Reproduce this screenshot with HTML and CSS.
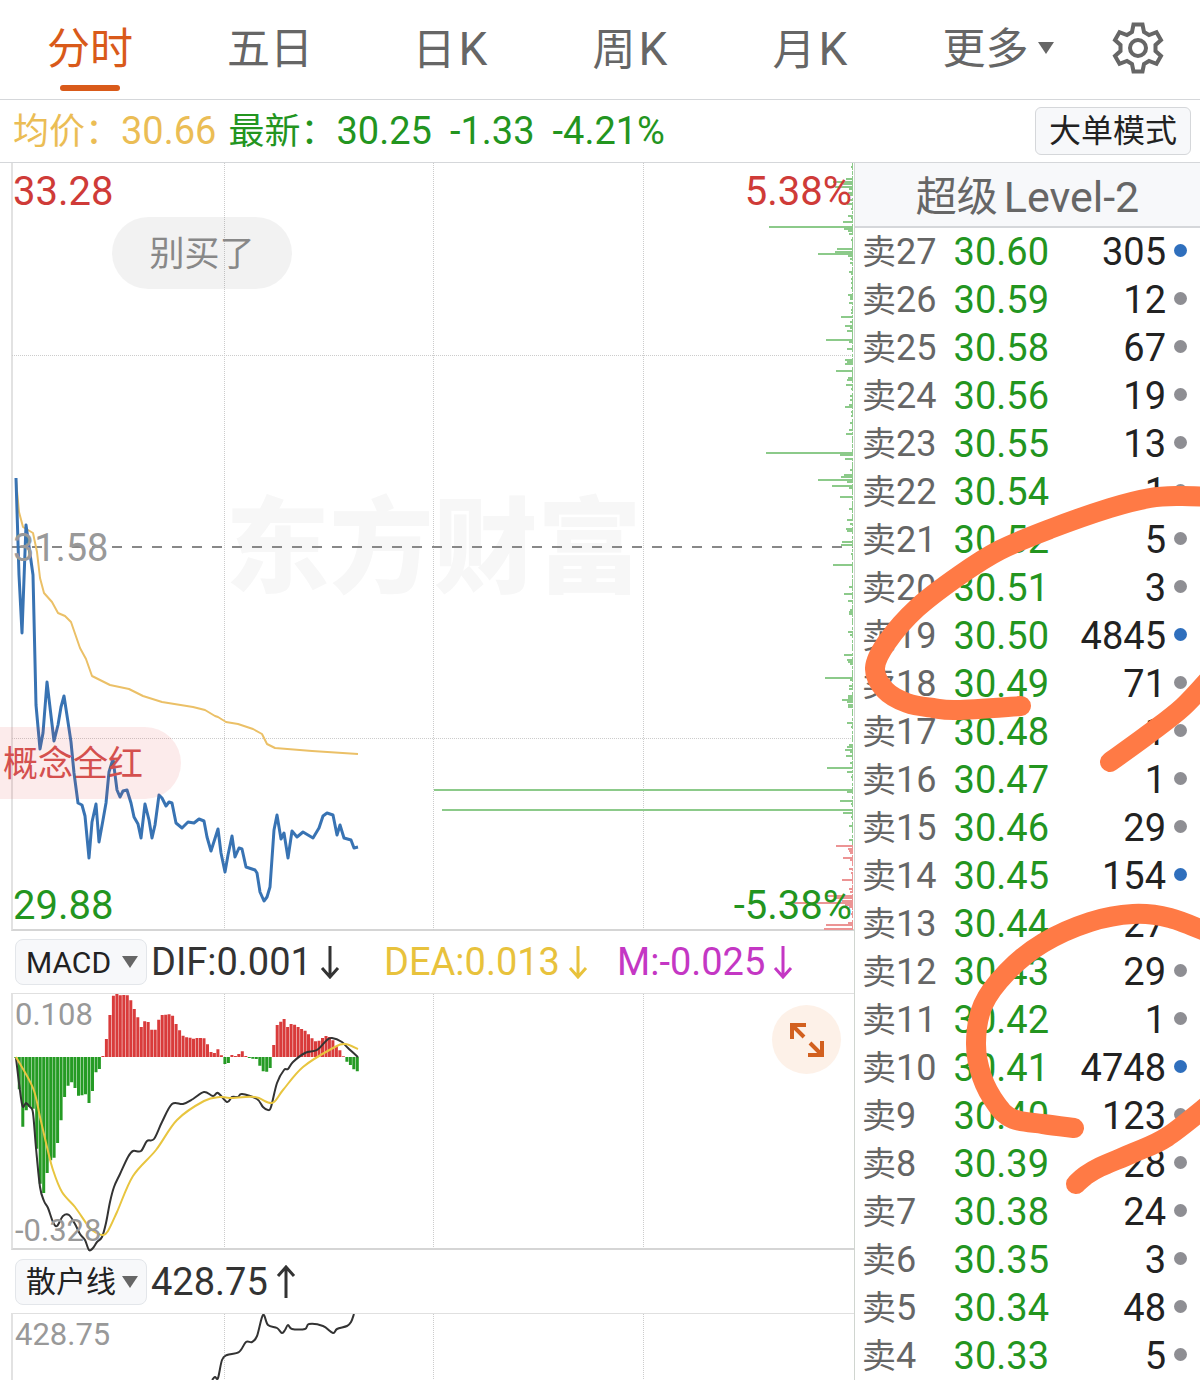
FILE: index.html
```
<!DOCTYPE html>
<html lang="zh-CN">
<head>
  <meta charset="UTF-8" />
  <meta name="viewport" content="width=device-width, initial-scale=1" />
  <title>分时行情</title>
  <link rel="stylesheet" href="styles.css">
</head>
<body>

<nav class="tabs">
  <a href="#" class="tab active">分时</a>
  <a href="#" class="tab">五日</a>
  <a href="#" class="tab">日<span class="k">K</span></a>
  <a href="#" class="tab">周<span class="k">K</span></a>
  <a href="#" class="tab">月<span class="k">K</span></a>
  <button class="tab more" type="button">更多<span class="caret"></span></button>
  <button class="settings" type="button" aria-label="设置">
    <svg width="52" height="52" viewBox="0 0 52 52">
      <path d="M21.5 2.5H30.5L32 10L37 13L44.5 10.2L49 18L43.5 23V29L49 34L44.5 41.8L37 39L32 42L30.5 49.5H21.5L20 42L15 39L7.5 41.8L3 34L8.5 29V23L3 18L7.5 10.2L15 13L20 10Z" />
      <circle cx="26" cy="26" r="8" />
    </svg>
  </button>
</nav>

<div class="quote">
  <span class="avg">均价：<span class="num">30.66</span></span>
  <span class="last">最新：<span class="num">30.25</span></span>
  <span class="last num">-1.33</span>
  <span class="last num">-4.21%</span>
  <button class="mode" type="button">大单模式</button>
</div>

<main class="main">
  <section class="charts">

    <!-- 分时图 -->
    <div class="chart chart-price">
      <div class="watermark">东方财富</div>
      <svg viewBox="13 163 841 766" preserveAspectRatio="none">
        <path class="grid" d="M12 355.500H853M12 738.500H853M224.500 163V930M433.500 163V930M643.500 163V930" />
        <path class="base" d="M12 547H853" />
        <path class="depth sell-edge" d="M852.500 163V846" />
        <path class="depth buy-edge" d="M852.500 846V930" />
        <path class="depth" id="depthSell" />
        <path class="depth depth-buy" id="depthBuy" />
        <path class="line avg-line" id="avgLine" />
        <path class="line price-line" id="priceLine" />
      </svg>
      <span class="label top-left up">33.28</span>
      <span class="label top-right up">5.38%</span>
      <span class="label middle">31.58</span>
      <span class="label bottom-left down">29.88</span>
      <span class="label bottom-right down">-5.38%</span>
      <span class="comment comment-gray">别买了</span>
      <span class="comment comment-red">概念全红</span>
    </div>

    <!-- MACD -->
    <div class="toolbar">
      <span class="picker">
        <select aria-label="指标一"><option>MACD</option></select>
      </span>
      <div class="values">
        <span>DIF:0.001<svg class="arrow" viewBox="0 0 20 34"><path d="M10 1V32M2 23L10 32L18 23" /></svg></span>
        <span class="dea">DEA:0.013<svg class="arrow" viewBox="0 0 20 34"><path d="M10 1V32M2 23L10 32L18 23" /></svg></span>
        <span class="m">M:-0.025<svg class="arrow" viewBox="0 0 20 34"><path d="M10 1V32M2 23L10 32L18 23" /></svg></span>
      </div>
    </div>
    <div class="chart chart-macd">
      <svg viewBox="13 994 841 254" preserveAspectRatio="none">
        <path class="grid" d="M224.500 994V1248M433.500 994V1248M643.500 994V1248" />
        <path class="macd-up" id="macdUp" />
        <path class="macd-down" id="macdDown" />
        <path class="line dif-line" id="difLine" />
        <path class="line dea-line" id="deaLine" />
      </svg>
      <span class="label small top-left">0.108</span>
      <span class="label small bottom-left">-0.328</span>
      <button class="expand" type="button" aria-label="全屏">
        <svg width="36" height="36" viewBox="0 0 36 36">
          <path d="M3 17V3H17M3 3L15 15M33 19V33H19M33 33L21 21" />
        </svg>
      </button>
    </div>

    <!-- 散户线 -->
    <div class="toolbar">
      <span class="picker">
        <select aria-label="指标二"><option>散户线</option></select>
      </span>
      <div class="values">
        <span>428.75<svg class="arrow" viewBox="0 0 20 34"><path d="M10 33V2M2 11L10 2L18 11" /></svg></span>
      </div>
    </div>
    <div class="chart chart-retail">
      <svg viewBox="13 1314 841 66" preserveAspectRatio="none">
        <path class="grid" d="M224.500 1314V1380M433.500 1314V1380M643.500 1314V1380" />
        <path class="line dif-line" id="retailLine" />
      </svg>
      <span class="label small top-left">428.75</span>
    </div>
  </section>

  <!-- 盘口 -->
  <aside class="book">
    <h2>超级<span>Level-2</span></h2>
    <table>
      <tbody id="bookRows"></tbody>
    </table>
    <svg class="marker" viewBox="855 163 345 1217">
      <path id="markerA" />
      <path id="markerB" />
      <path id="markerC" />
      <path id="markerD" />
    </svg>
  </aside>
</main>

<script>
  // [档位, 价格, 手数]
  const orders = [
    [27, '30.60', 305], [26, '30.59', 12], [25, '30.58', 67], [24, '30.56', 19],
    [23, '30.55', 13], [22, '30.54', 1], [21, '30.52', 5], [20, '30.51', 3],
    [19, '30.50', 4845], [18, '30.49', 71], [17, '30.48', 1], [16, '30.47', 1],
    [15, '30.46', 29], [14, '30.45', 154], [13, '30.44', 27], [12, '30.43', 29],
    [11, '30.42', 1], [10, '30.41', 4748], [9, '30.40', 123], [8, '30.39', 28],
    [7, '30.38', 24], [6, '30.35', 3], [5, '30.34', 48], [4, '30.33', 5]
  ];
  // 蓝点的档位
  const marked = [27, 19, 14, 10];

  document.getElementById('bookRows').innerHTML = orders.map(([level, price, qty]) => `
    <tr>
      <th scope="row"><span class="side">卖</span>${level}</th>
      <td class="price">${price}</td>
      <td class="qty">${qty}<i class="dot${marked.includes(level) ? ' blue' : ''}"></i></td>
    </tr>`).join('');

  function setPath(id, d) {
    document.getElementById(id).setAttribute('d', d);
  }

  function polyline(p) {
    return 'M' + p.map(a => a.join(' ')).join('L');
  }

  // Catmull-Rom 平滑曲线
  function smooth(p) {
    let d = 'M' + p[0].join(' ');
    for (let i = 0; i < p.length - 1; i++) {
      const a = p[i - 1] || p[i], b = p[i], c = p[i + 1], e = p[i + 2] || c;
      d += `C${b[0] + (c[0] - a[0]) / 6} ${b[1] + (c[1] - a[1]) / 6} ${c[0] - (e[0] - b[0]) / 6} ${c[1] - (e[1] - b[1]) / 6} ${c[0]} ${c[1]}`;
    }
    return d;
  }

  // --- 分时线 ---
  setPath('priceLine', polyline([
    [16,478],[19,575],[22,633],[26,525],[33,575],[36,705],[40,749],[43,733],[47,682],[54,741],[58,725],
    [61,707],[64,696],[68,722],[71,742],[74,773],[78,803],[82,805],[85,816],[89,858],[92,822],[96,804],
    [99,842],[103,820],[106,803],[109,772],[113,759],[117,790],[120,797],[123,791],[127,790],[131,803],
    [134,817],[138,824],[141,838],[145,804],[149,820],[152,838],[155,825],[159,795],[162,798],[166,806],
    [169,802],[172,803],[176,823],[182,828],[188,822],[194,823],[199,819],[204,821],[207,837],[211,851],
    [218,829],[221,853],[225,872],[228,855],[232,836],[235,857],[239,848],[242,849],[246,867],[255,870],
    [257,873],[260,892],[264,901],[267,897],[270,887],[274,830],[277,815],[281,839],[284,833],[288,858],
    [292,831],[297,837],[303,832],[313,838],[319,828],[323,816],[327,813],[333,815],[337,835],[340,825],
    [344,838],[351,840],[354,848],[358,847]
  ]));
  setPath('avgLine', polyline([
    [16,480],[19,512],[23,527],[33,533],[37,552],[40,578],[44,593],[52,602],[58,613],[65,616],[71,622],
    [80,648],[86,659],[92,676],[110,685],[129,689],[143,696],[162,702],[193,707],[205,710],[215,716],
    [218,717],[226,722],[238,724],[253,729],[262,734],[267,744],[275,748],[312,751],[358,754]
  ]));

  // --- 挂单分布: [y, 长度] ---
  const sellDepth = [
    [167,2],[172,1],[179,7],[182,20],[184,10],[187,18],[189,4],[193,5],[195,3],[200,5],[204,6],[209,2],
    [216,5],[218,2],[222,10],[227,84],[229,9],[231,5],[234,4],[240,2],[245,1],[249,16],[252,18],[254,35],
    [256,5],[259,3],[263,3],[272,4],[274,2],[279,2],[283,2],[288,2],[295,5],[297,3],[299,3],[303,4],
    [310,2],[313,2],[317,12],[322,3],[326,8],[328,3],[331,6],[340,27],[342,4],[349,6],[360,8],[362,6],
    [364,8],[371,17],[378,5],[380,6],[385,7],[389,2],[396,3],[400,3],[405,4],[407,8],[412,2],[416,2],
    [423,3],[430,4],[434,7],[439,1],[445,1],[453,87],[455,13],[459,8],[470,3],[475,9],[477,12],[480,35],
    [482,6],[486,21],[488,4],[497,13],[509,4],[520,6],[524,3],[529,7],[531,6],[538,1],[542,11],[545,12],
    [554,2],[565,20],[569,1],[577,1],[587,4],[594,9],[601,5],[610,3],[612,4],[614,4],[621,1],[632,5],
    [635,3],[648,1],[655,9],[660,6],[662,5],[664,3],[678,28],[680,3],[686,4],[689,4],[696,5],[698,5],
    [700,11],[702,6],[705,5],[707,5],[723,6],[727,2],[732,1],[745,4],[747,6],[750,8],[752,3],[756,7],
    [763,3],[768,26],[772,6],[777,2],[790,419],[792,6],[801,13],[804,2],[810,411],[813,10],[817,2],
    [826,4],[840,4]
  ];
  const buyDepth = [
    [846,17],[849,5],[851,4],[853,3],[858,10],[860,3],[869,4],[873,2],[880,11],[889,4],[892,3],[896,26],
    [898,18],[901,11],[903,66],[905,8],[907,4],[914,2],[923,5],[925,27],[929,29]
  ];
  const depthPath = rows => rows.map(([y, w]) => `M853 ${y}h${-w}`).join('');
  setPath('depthSell', depthPath(sellDepth));
  setPath('depthBuy', depthPath(buyDepth));

  // --- MACD 柱, 三分之一像素为单位 ---
  const macd = [
    -3,-97,-209,-160,-150,-155,-275,-380,-408,-348,-310,-302,-258,-190,-120,-86,-76,-93,-116,-115,
    -112,-138,-102,-46,-36,3,54,126,184,189,185,186,185,170,144,119,90,107,105,82,82,112,126,127,128,
    124,99,80,64,59,58,55,57,57,56,38,15,12,23,5,-21,-18,6,3,9,17,3,-3,-5,-6,-26,-43,-44,-33,36,96,
    106,114,90,99,97,90,84,79,68,56,47,49,57,63,60,50,32,20,2,-14,-24,-37,-43
  ];
  let up = '', down = '';
  macd.forEach((v, i) => {
    const bar = `M${(15.8 + i * 3.485).toFixed(1)} 1057v${(-v / 3).toFixed(1)}`;
    if (v > 0) up += bar; else down += bar;
  });
  setPath('macdUp', up);
  setPath('macdDown', down);

  setPath('difLine', smooth([
    [16,1058],[22,1104],[26,1103],[30,1107],[33,1113],[36,1148],[40,1187],[44,1201],[48,1208],[53,1222],
    [57,1226],[63,1216],[69,1215],[75,1224],[80,1234],[85,1240],[89,1250],[93,1248],[97,1242],[102,1237],
    [106,1223],[110,1202],[114,1187],[120,1174],[128,1157],[133,1151],[141,1151],[147,1141],[154,1139],
    [162,1122],[172,1104],[183,1104],[193,1099],[204,1092],[213,1096],[218,1093],[227,1102],[232,1097],
    [238,1097],[242,1094],[257,1099],[263,1107],[268,1110],[271,1107],[277,1083],[284,1070],[288,1069],
    [293,1062],[305,1053],[317,1050],[327,1040],[332,1038],[342,1042],[348,1048],[358,1057]
  ]));
  setPath('deaLine', smooth([
    [16,1057],[33,1088],[40,1117],[47,1147],[53,1170],[62,1192],[75,1207],[89,1227],[97,1233],[103,1235],
    [108,1231],[117,1212],[133,1176],[156,1150],[177,1120],[204,1101],[220,1097],[230,1098],[255,1097],
    [272,1103],[283,1090],[303,1067],[333,1048],[345,1044],[358,1049]
  ]));
  setPath('retailLine', smooth([
    [212,1380],[215,1377],[218,1378],[222,1360],[227,1355],[239,1352],[246,1342],[252,1342],[257,1336],
    [263,1315],[268,1325],[277,1328],[282,1333],[285,1330],[288,1325],[292,1329],[305,1329],[309,1324],
    [323,1326],[333,1333],[337,1329],[347,1326],[351,1322],[354,1314]
  ]));

  // --- 手绘圈 ---
  setPath('markerA', smooth([
    [1212,497],[1180,496],[1150,498],[1110,508],[1050,529],[1000,550],[960,575],[917,608],[887,642],
    [875,668],[885,690],[907,703],[933,708],[957,710],[1021,706]
  ]));
  setPath('markerB', smooth([[1212,676],[1183,707],[1150,733],[1110,762]]));
  setPath('markerC', smooth([
    [1212,934],[1170,918],[1133,914],[1090,922],[1043,943],[1007,972],[983,1005],[976,1043],[982,1077],
    [997,1105],[1013,1119],[1043,1124],[1074,1128]
  ]));
  setPath('markerD', smooth([[1212,1102],[1167,1137],[1133,1153],[1100,1167],[1085,1176],[1076,1184]]));
</script>
</body>
</html>
```

FILE: styles.css
```
* {
  box-sizing: border-box;
}
body {
  margin: 0;
  background: #fff;
  color: #222;
  font-family: Roboto, "Noto Sans CJK SC", sans-serif;
  overflow-x: hidden;
}
button, select {
  font-family: inherit;
  color: inherit;
  cursor: pointer;
}

/* --- Tabs --- */
.tabs {
  display: grid;
  grid-template-columns: repeat(5, 15fr) 16fr 9fr;
  height: 100px;
  border-bottom: 1px solid #d5d7da;
}
.tab {
  height: 96px;
  padding: 0;
  border: none;
  background: none;
  color: #666;
  font-size: 43px;
  line-height: 98px;
  text-align: center;
  text-decoration: none;
}
.tab.active {
  position: relative;
  color: #d95a1a;
}
.tab.active::after {
  content: "";
  position: absolute;
  left: 50%;
  bottom: 5px;
  width: 60px;
  height: 6px;
  margin-left: -30px;
  border-radius: 3px;
  background: #d95a1a;
}
.k {
  margin-left: 3px;
  font-size: 46px;
}
.more {
  padding-left: 4px;
}
.caret {
  display: inline-block;
  margin-left: 9px;
  vertical-align: 10px;
  border: 8px solid transparent;
  border-top: 12px solid #666;
  border-bottom: none;
}
.settings {
  display: flex;
  align-items: center;
  justify-content: center;
  height: 96px;
  padding: 0 16px 0 0;
  border: none;
  background: none;
}
.settings svg {
  fill: none;
  stroke: #666;
  stroke-width: 4;
}

/* --- Quote row --- */
.quote {
  display: flex;
  align-items: center;
  height: 63px;
  padding: 0 9px 0 13px;
  border-bottom: 1px solid #d5d7da;
  font-size: 36px;
  line-height: 62px;
  white-space: nowrap;
}
.num {
  font-size: 38px;
}
.avg {
  margin-right: 12px;
  color: #ebbd55;
}
.last {
  margin-right: 18px;
  color: #23951f;
}
.mode {
  height: 48px;
  margin-left: auto;
  padding: 0 13px;
  border: 1px solid #d5d7da;
  border-radius: 6px;
  background: #f7f8fa;
  font-size: 32px;
  line-height: 44px;
}

.main {
  display: grid;
  grid-template-columns: minmax(0, 1fr) 346px;
}
.charts {
  display: flex;
  flex-direction: column;
  padding-left: 11px;
}

/* --- Charts --- */
.chart {
  position: relative;
  border-left: 2px solid #e2e2e2;
}
.chart > svg {
  display: block;
  position: relative;
  width: 100%;
  height: 100%;
}
.chart path {
  fill: none;
  vector-effect: non-scaling-stroke;
}
.chart-price {
  height: 768px;
  border-bottom: 2px solid #d5d5d5;
}
.chart-macd {
  height: 257px;
  border-top: 1px solid #e0e0e0;
  border-bottom: 2px solid #d5d5d5;
}
.chart-price > svg, .chart-macd > svg {
  overflow: visible;
}
.chart-retail {
  height: 67px;
  border-top: 1px solid #e0e0e0;
}
.grid {
  stroke: #ccc;
  stroke-width: 1;
  stroke-dasharray: 1 1;
}
.base {
  stroke: #888;
  stroke-width: 2;
  stroke-dasharray: 10 10;
}
.line {
  stroke-width: 2;
  stroke-linejoin: round;
}
.price-line {
  stroke: #3873b3;
  stroke-width: 3;
}
.avg-line {
  stroke: #ebc067;
}
.dif-line {
  stroke: #333;
}
.dea-line {
  stroke: #e8c53f;
}
.depth {
  stroke: #8cca8a;
  stroke-width: 2;
}
.depth-buy, .buy-edge {
  stroke: #ec9494;
}
.sell-edge, .buy-edge {
  stroke-width: 1;
  stroke-dasharray: 7 2 3 1;
}
.macd-up {
  stroke: #d93b3b;
  stroke-width: 3;
}
.macd-down {
  stroke: #259b24;
  stroke-width: 3;
}
.watermark {
  position: absolute;
  top: 50%;
  left: 50%;
  transform: translate(-50%, -50%);
  padding-top: 8px;
  color: #f7f7f7;
  font-size: 104px;
  font-weight: 900;
  line-height: 96px;
  white-space: nowrap;
}
.label {
  position: absolute;
  color: #999;
  font-size: 38px;
  line-height: 44px;
}
.label.up, .label.down {
  font-size: 40px;
}
.label.up {
  color: #cf3b38;
}
.label.down {
  color: #23951f;
}
.label.small {
  left: 2px;
  font-size: 31px;
  line-height: 38px;
}
.top-left, .top-right {
  top: 7px;
}
.small.top-left {
  top: 2px;
}
.middle {
  top: 50%;
  margin-top: -20px;
}
.bottom-left, .bottom-right {
  bottom: 1px;
}
.small.bottom-left {
  bottom: -2px;
}
.top-left, .middle, .bottom-left {
  left: 0;
}
.top-right, .bottom-right {
  right: 2px;
}
.comment {
  position: absolute;
  height: 72px;
  border-radius: 36px;
  font-size: 35px;
  line-height: 76px;
  text-align: center;
}
.comment-gray {
  top: 54px;
  left: 99px;
  width: 180px;
  background: rgba(0, 0, 0, 0.05);
  color: #888;
}
.comment-red {
  top: 564px;
  left: -49px;
  width: 217px;
  padding-right: 38px;
  background: rgba(226, 60, 60, 0.1);
  color: #d4504e;
  text-align: right;
}
.expand {
  position: absolute;
  top: 11px;
  right: 13px;
  display: flex;
  align-items: center;
  justify-content: center;
  width: 69px;
  height: 69px;
  padding: 0;
  border: none;
  border-radius: 50%;
  background: #fdf1e8;
}
.expand path {
  stroke: #d2601f;
  stroke-width: 4;
}

/* --- Indicator toolbars --- */
.toolbar {
  display: flex;
  align-items: center;
  height: 62px;
  padding: 0 4px;
}
.chart-macd + .toolbar {
  height: 63px;
}
.picker {
  position: relative;
  flex: none;
}
.picker::after {
  content: "";
  position: absolute;
  top: 17px;
  right: 9px;
  border: 8px solid transparent;
  border-top: 12px solid #666;
  border-bottom: none;
  pointer-events: none;
}
.picker select {
  display: block;
  width: 132px;
  height: 46px;
  padding: 0 0 0 10px;
  border: 1px solid #e3e6ea;
  border-radius: 8px;
  background: #f7f8fa;
  font-size: 30px;
  appearance: none;
}
.values {
  flex: 1;
  display: grid;
  grid-template-columns: repeat(3, 1fr);
  padding-left: 4px;
  font-size: 38px;
  line-height: 44px;
  color: #333;
  white-space: nowrap;
}
.values span {
  display: flex;
  align-items: center;
}
.values .dea {
  color: #e8c23c;
}
.values .m {
  color: #c437c4;
}
.arrow {
  width: 20px;
  height: 34px;
  margin-left: 8px;
  fill: none;
  stroke: currentColor;
  stroke-width: 3;
}

/* --- Order book --- */
.book {
  position: relative;
  border-left: 1px solid #d0d5d0;
}
.book h2 {
  display: flex;
  justify-content: center;
  gap: 6px;
  height: 65px;
  margin: 0;
  border-bottom: 2px solid #d5d7da;
  background: #f7f8fa;
  color: #666;
  font-size: 41px;
  font-weight: 400;
  line-height: 68px;
}
.book h2 span {
  font-size: 43px;
}
.book table {
  width: 100%;
  table-layout: fixed;
  border-collapse: collapse;
  font-size: 38px;
}
.book th, .book td {
  height: 48px;
  padding: 0;
  line-height: 48px;
}
.book th {
  width: 90px;
  padding-left: 7px;
  color: #666;
  font-size: 36px;
  font-weight: 400;
  text-align: left;
  white-space: nowrap;
}
.side {
  font-size: 34px;
}
.price {
  width: 104px;
  color: #23951f;
  text-align: right;
}
.book .qty {
  padding-right: 13px;
  text-align: right;
}
.dot {
  display: inline-block;
  width: 13px;
  height: 13px;
  margin-left: 8px;
  border-radius: 50%;
  background: #8e8e93;
  vertical-align: 8px;
}
.dot.blue {
  background: #2f6fbd;
}

/* --- Hand-drawn circles over the table --- */
.marker {
  position: absolute;
  top: 0;
  left: 0;
  width: 100%;
  height: 1217px;
  overflow: hidden;
  pointer-events: none;
}
.marker path {
  fill: none;
  stroke: #ff7a45;
  stroke-width: 20;
  stroke-linecap: round;
}
```
